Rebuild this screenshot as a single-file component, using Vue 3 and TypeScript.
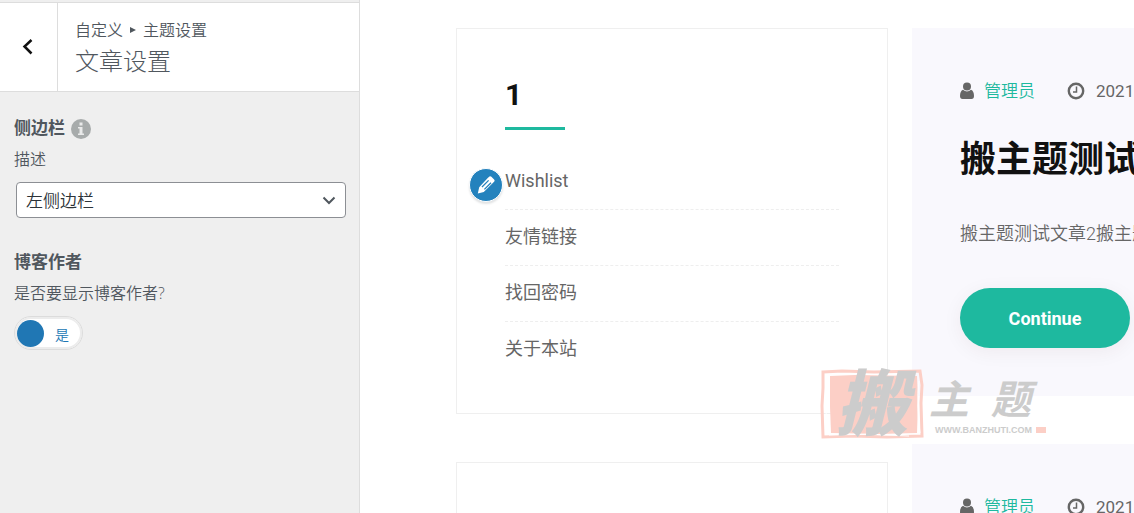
<script setup lang="ts">
import { ref } from 'vue'

const sidebar = ref('left')
const showAuthor = ref(true)
const links: string[] = ['Wishlist', '友情链接', '找回密码', '关于本站']
const posts = [
  { id: 2, title: '搬主题测试文章2', excerpt: '搬主题测试文章2搬主题测试文章2搬主题测试文章2' },
  { id: 1, title: '搬主题测试文章1', excerpt: '搬主题测试文章1搬主题测试文章1搬主题测试文章1' },
]
</script>

<template>
  <div class="customizer">
    <aside class="panel">
      <header class="panel-head">
        <button class="back" type="button" aria-label="返回">
          <svg width="12" height="18" viewBox="0 0 12 18"><path d="M9.500 2 2.500 8.500l7 7" /></svg>
        </button>
        <div class="heading">
          <p class="crumbs">
            <span>自定义</span>
            <svg width="6" height="6" viewBox="0 0 6 6"><path d="M0 0 6 3 0 6z" /></svg>
            <span>主题设置</span>
          </p>
          <h1>文章设置</h1>
        </div>
      </header>

      <section class="controls">
        <div class="control">
          <div class="label-row">
            <label class="name" for="sidebar">侧边栏</label>
            <svg class="info" width="20" height="20" viewBox="0 0 20 20">
              <circle cx="10" cy="10" r="10" fill="#a7abab" />
              <path d="M8.500 3.500h3v3h-3zM7 8h4.500v6.500H13V16H7v-1.500h1.500v-5H7z" fill="#e9eaea" />
            </svg>
          </div>
          <p class="desc">描述</p>
          <div class="select">
            <select id="sidebar" v-model="sidebar">
              <option value="left">左侧边栏</option>
              <option value="right">右侧边栏</option>
            </select>
            <svg width="14" height="9" viewBox="0 0 14 9"><path d="m1.500 1.500 5.500 5.500 5.500-5.500" /></svg>
          </div>
        </div>

        <div class="control">
          <label class="name" for="author">博客作者</label>
          <p class="desc">是否要显示博客作者?</p>
          <label class="toggle">
            <input id="author" v-model="showAuthor" type="checkbox" />
            <span class="knob"></span>
            <span class="state">{{ showAuthor ? '是' : '否' }}</span>
          </label>
        </div>
      </section>
    </aside>

    <main class="preview">
      <div class="columns">
        <div class="stack">
          <section class="widget">
            <h2>1</h2>
            <div class="list-wrap">
              <button class="edit" type="button" aria-label="编辑">
                <svg width="20" height="20" viewBox="0 0 20 20">
                  <path
                    d="M11.500 3.200 13.400 1.500q1-.8 2 .2l2.700 2.700q1 1 .2 2l-1.700 1.900L7.800 17 1.800 18.400 3.200 12.200z"
                    fill="#fff"
                  />
                  <path d="m6 12 6.600-6.600M8.400 14.400 15 7.800" stroke="#2482bd" stroke-width="1.300" />
                </svg>
              </button>
              <ul>
                <li v-for="link in links" :key="link"><a href="#">{{ link }}</a></li>
              </ul>
            </div>
          </section>
          <section class="widget"></section>
        </div>

        <div class="stack">
          <article v-for="post in posts" :key="post.id" class="post">
            <div class="meta">
              <svg width="14" height="18" viewBox="0 0 14 18">
                <circle cx="7" cy="4.500" r="4" />
                <path d="M3 7.800Q7 11 11 7.800q3 1.200 3 6.200 0 3-2.500 3h-9Q0 17 0 14q0-5 3-6.200z" />
              </svg>
              <a href="#">管理员</a>
              <svg class="clock" width="18" height="18" viewBox="0 0 18 18">
                <circle cx="9" cy="9" r="7.200" />
                <path d="M9.500 4.500v5.500H6" />
              </svg>
              <time>2021年5月12日</time>
            </div>
            <h2>{{ post.title }}</h2>
            <p>{{ post.excerpt }}</p>
            <a class="more" href="#">Continue</a>
          </article>
        </div>
      </div>

      <div class="brand">
        <div class="seal">
          <svg width="104" height="70" viewBox="0 0 104 70">
            <path d="M3 3 22 2l32 1 46-1 2 14-1 18 1 33-35 1-34-1-30 1-1-31 1-18z" fill="none" stroke="#fccfc6" stroke-width="3" />
            <path d="M10 7 35 6l62 1 1 25-1 32-38 1-48-1-1-26z" fill="#fccfc6" />
            <path d="M6 6q-1 28 1 58M99 12q-3 24 1 52M9 66q40-2 80 1" fill="none" stroke="#fff" stroke-width="1" />
          </svg>
          <span>搬</span>
        </div>
        <div class="brand-text">
          <div class="brand-name"><span>主</span><span>题</span></div>
          <div class="site"><span>WWW.BANZHUTI.COM</span><i></i></div>
        </div>
      </div>
    </main>
  </div>
</template>

<style>
body {
  margin: 0;
}
</style>

<style scoped>
.customizer {
  display: flex;
  height: 100vh;
  overflow: hidden;
  font-family: Roboto, 'Noto Sans CJK SC', sans-serif;
  color: #666;
  background: #fff;
}
h1,
h2,
p,
ul {
  margin: 0;
  padding: 0;
}
.customizer * {
  box-sizing: border-box;
}
.panel {
  flex: 0 0 360px;
  padding-top: 2px;
  background: #efefef;
  border-right: 1px solid #ddd;
  color: #50575e;
  font-family: 'Open Sans', 'Noto Sans CJK SC', sans-serif;
  font-weight: 350;
}
.panel-head {
  display: flex;
  background: #fff;
  border-top: 1px solid #ddd;
  border-bottom: 1px solid #ddd;
}
.back {
  flex: 0 0 58px;
  display: grid;
  place-items: center;
  padding: 0 2px 0 0;
  border: 0;
  border-right: 1px solid #ddd;
  background: #fff;
}
.back path {
  fill: none;
  stroke: #111;
  stroke-width: 2.5;
}
.heading {
  padding: 15px 17px 12px;
}
.crumbs {
  display: flex;
  align-items: center;
  gap: 7px;
  font-size: 16px;
  line-height: 24px;
}
.crumbs path {
  fill: #50575e;
}
h1 {
  padding-top: 1px;
  font-size: 24px;
  font-weight: 300;
  line-height: 36px;
}
.controls {
  display: flex;
  flex-direction: column;
  gap: 32px;
  padding: 24px 13px 0 14px;
}
.label-row {
  display: flex;
  align-items: center;
  gap: 6px;
}
.name {
  display: block;
  font-size: 17px;
  font-weight: 700;
  line-height: 24px;
}
.info {
  margin-top: 2px;
}
.desc {
  margin-top: 7px;
  font-size: 16px;
  line-height: 24px;
}
.select {
  position: relative;
  margin: 11px 0 0 2px;
}
.select select {
  display: block;
  width: 100%;
  height: 36px;
  padding: 0 32px 0 9px;
  border: 1px solid #8c8f94;
  border-radius: 4px;
  appearance: none;
  background: #fff;
  color: #2c3338;
  font: inherit;
  font-size: 17px;
}
.select svg {
  position: absolute;
  top: 14px;
  right: 10px;
  pointer-events: none;
}
.select path {
  fill: none;
  stroke: #50575e;
  stroke-width: 2;
}
.toggle {
  display: inline-flex;
  align-items: center;
  gap: 11px;
  width: 69px;
  height: 34px;
  margin-top: 11px;
  padding: 0 2px;
  border: 1px solid #dcdcdc;
  border-radius: 17px;
  background: #fff;
  box-shadow: inset 0 0 0 2px #ececec;
  color: #2077b4;
  font-size: 14px;
}
.toggle input {
  position: absolute;
  opacity: 0;
  width: 1px;
  height: 1px;
  margin: 0;
}
.knob {
  width: 27px;
  height: 27px;
  border-radius: 50%;
  background: #2077b4;
}
.state {
  padding-top: 4px;
  line-height: 20px;
}
.preview {
  position: relative;
  flex: 1;
  min-width: 0;
  overflow: hidden;
}
.columns {
  display: grid;
  grid-template-columns: 432px minmax(864px, 1fr);
  gap: 24px;
  padding: 28px 96px 0;
}
.stack {
  display: flex;
  flex-direction: column;
  gap: 48px;
}
.widget {
  min-height: 386px;
  padding: 48px 48px 36px;
  border: 1px solid #efefef;
}
.widget h2 {
  padding-bottom: 16px;
  color: #111;
  font-size: 30px;
  line-height: 36px;
}
.widget h2::after {
  content: '';
  display: block;
  width: 60px;
  height: 3px;
  margin-top: 14px;
  background: #1eb99f;
}
.list-wrap {
  position: relative;
  padding-top: 8px;
}
.edit {
  position: absolute;
  top: 22px;
  left: -36px;
  display: grid;
  place-items: center;
  width: 34px;
  height: 34px;
  padding: 0;
  border: 1px solid #fff;
  border-radius: 50%;
  background: #2482bd;
  box-shadow: 0 2px 2px rgba(60, 67, 74, 0.15);
}
.edit path:last-child {
  fill: none;
}
ul {
  list-style: none;
}
li {
  height: 56px;
  padding-bottom: 2px;
  border-bottom: 1px dashed #eee;
  font-size: 18px;
  line-height: 53px;
}
li:last-child {
  height: 53px;
  padding-bottom: 0;
  border-bottom: 0;
}
li a {
  color: #666;
  text-decoration: none;
}
.post {
  padding: 48px;
  background: #f9f8fd;
}
.meta {
  display: flex;
  align-items: center;
  gap: 11px;
  padding-top: 1px;
  font-size: 17px;
  line-height: 28px;
}
.meta svg {
  fill: #666;
}
.meta a {
  margin-left: -1px;
  color: #1eb99f;
  font-weight: 350;
  text-decoration: none;
}
.meta .clock {
  margin-left: 21px;
}
.clock circle,
.clock path {
  fill: none;
  stroke: #666;
  stroke-width: 2.4;
}
.clock path {
  stroke-width: 1.5;
}
.post h2 {
  margin-top: 31px;
  color: #111;
  font-size: 36px;
  line-height: 48px;
}
.post p {
  margin: 33px 0 37px;
  font-size: 18px;
  font-weight: 350;
  line-height: 34px;
}
.more {
  display: grid;
  place-items: center;
  width: 170px;
  height: 60px;
  border-radius: 30px;
  background: #1eb99f;
  box-shadow: 0 4px 20px rgba(60, 20, 20, 0.06);
  color: #fff;
  font-size: 18px;
  font-weight: 700;
  text-decoration: none;
}
.brand {
  position: absolute;
  top: 369px;
  left: 460px;
  display: flex;
  gap: 5px;
  color: #ccc;
  pointer-events: none;
}
.seal {
  display: grid;
  width: 104px;
  height: 70px;
}
.seal > * {
  grid-area: 1 / 1;
}
.seal span {
  padding-top: 3px;
  font-size: 72px;
  font-weight: 900;
  font-style: italic;
  line-height: 68px;
  text-align: center;
}
.brand-name {
  display: flex;
  gap: 22px;
  padding-top: 12px;
  font-size: 40px;
  font-style: italic;
  font-weight: 700;
  line-height: 40px;
}
.site {
  display: flex;
  align-items: center;
  gap: 4px;
  padding-left: 6px;
  font: 700 9px/18px 'Liberation Sans', sans-serif;
}
.site i {
  width: 10px;
  height: 6px;
  background: #fccfc6;
}
</style>
